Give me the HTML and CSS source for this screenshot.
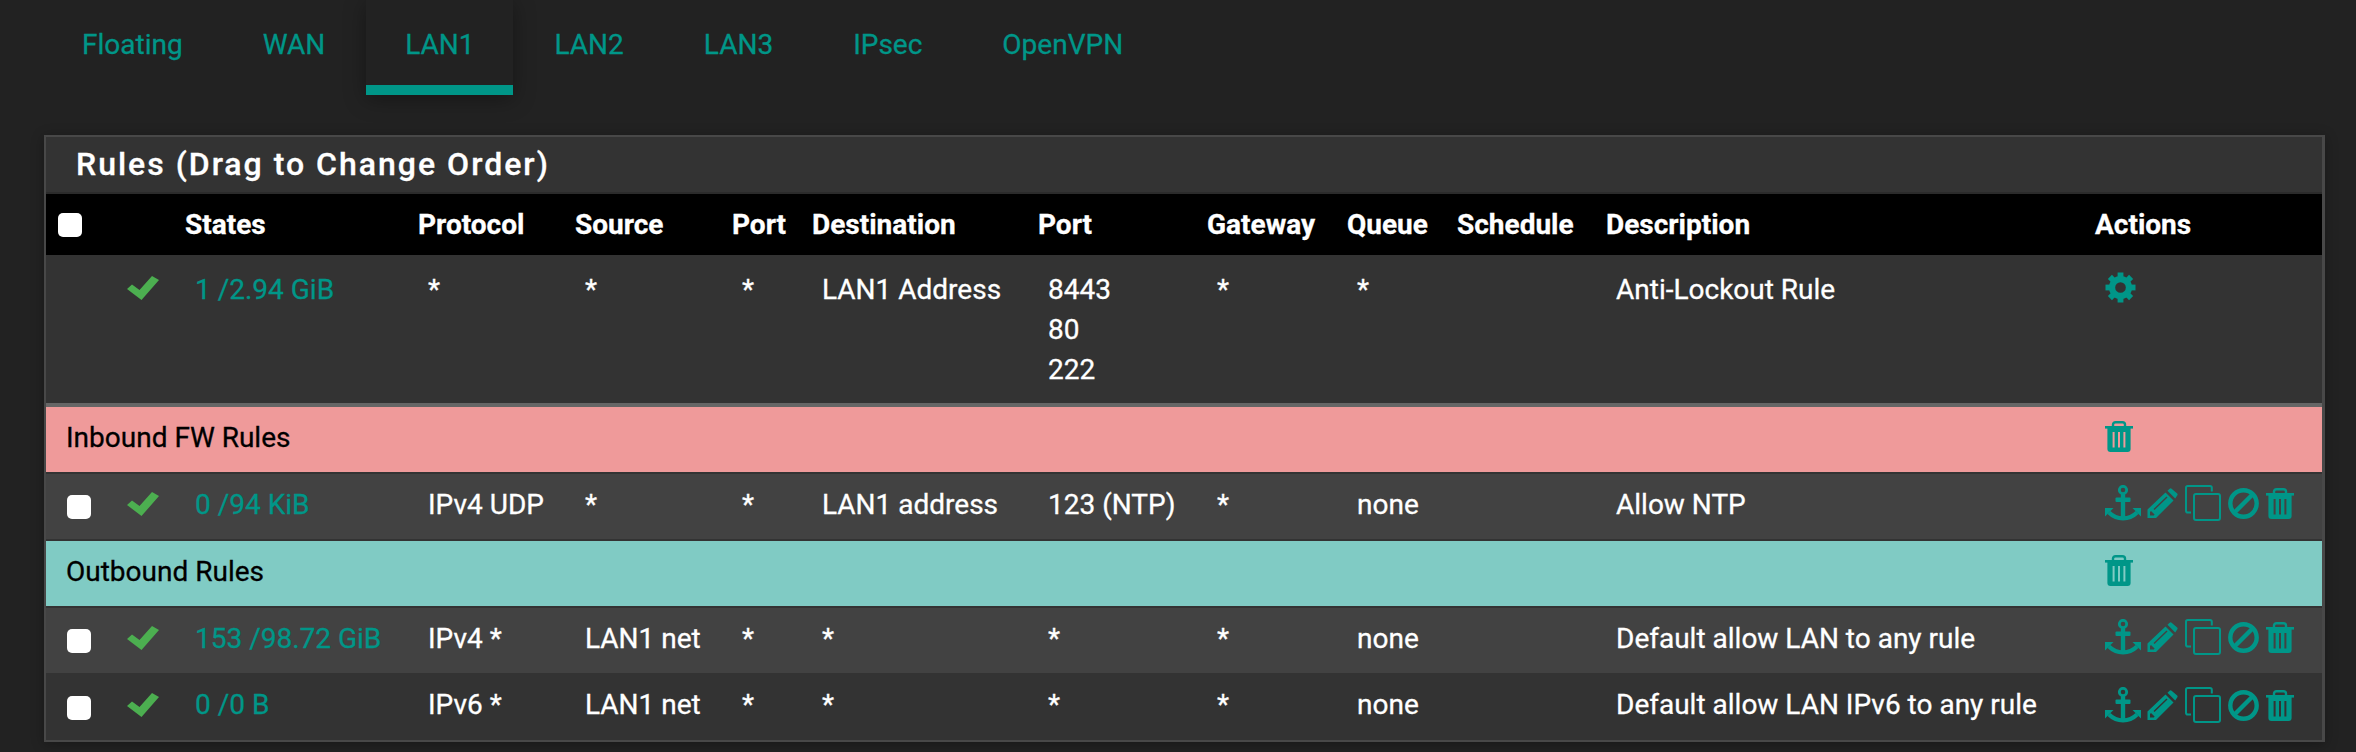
FILE: index.html
```html
<!DOCTYPE html>
<html lang="en">
<head>
<meta charset="utf-8">
<title>Firewall Rules: LAN1</title>
<link rel="stylesheet" href="styles.css">
</head>
<body>
<svg class="sprites" aria-hidden="true">
  <symbol id="i-check" viewBox="0 0 32 24"><polygon fill="currentColor" points="0,13 5,8.5 12.5,14 25,0 32,4 14.5,24"/></symbol>
  <symbol id="i-gear" viewBox="0 0 32 32">
    <circle cx="16" cy="16" r="8.7" fill="none" stroke="currentColor" stroke-width="6.4"/>
    <g fill="currentColor">
      <rect x="13" y="0.5" width="6" height="6"/><rect x="13" y="0.5" width="6" height="6" transform="rotate(45 16 16)"/>
      <rect x="13" y="0.5" width="6" height="6" transform="rotate(90 16 16)"/><rect x="13" y="0.5" width="6" height="6" transform="rotate(135 16 16)"/>
      <rect x="13" y="0.5" width="6" height="6" transform="rotate(180 16 16)"/><rect x="13" y="0.5" width="6" height="6" transform="rotate(225 16 16)"/>
      <rect x="13" y="0.5" width="6" height="6" transform="rotate(270 16 16)"/><rect x="13" y="0.5" width="6" height="6" transform="rotate(315 16 16)"/>
    </g>
  </symbol>
  <symbol id="i-trash" viewBox="0 0 28 31">
    <path fill="none" stroke="currentColor" stroke-width="2.4" d="M8 6V3.6Q8 1.2 10.6 1.2H17.4Q20 1.2 20 3.6V6"/>
    <rect fill="currentColor" y="5" width="28" height="2.6"/>
    <path fill="currentColor" fill-rule="evenodd" d="M2.4 7H25.6V28Q25.6 31 22.6 31H5.4Q2.4 31 2.4 28ZM7.6 11V26.5H9.6V11ZM13 11V26.5H15V11ZM18.4 11V26.5H20.4V11Z"/>
  </symbol>
  <symbol id="i-anchor" viewBox="0 0 36 36">
    <circle cx="18" cy="5" r="3.7" fill="none" stroke="currentColor" stroke-width="2.8"/>
    <rect fill="currentColor" x="10.5" y="12.5" width="15" height="4.6" rx="1"/>
    <rect fill="currentColor" x="15.8" y="9" width="4.4" height="25"/>
    <path fill="none" stroke="currentColor" stroke-width="4.2" d="M4 27.5C8 31.5 13 33.4 18 33.4C23 33.4 28 31.5 32 27.5"/>
    <polygon fill="currentColor" points="0,23 8.5,23 0,31.5"/>
    <polygon fill="currentColor" points="36,23 27.5,23 36,31.5"/>
  </symbol>
  <symbol id="i-pencil" viewBox="0 0 31 31">
    <path fill="currentColor" fill-rule="evenodd" d="M0.5 21.5L18.5 4.5L26.5 12.5L9 30H0.5ZM19.5 8.5L6.5 21L7.5 22L20.5 9.5ZM3 24V27.5H6.8L7.6 26.6L4 23Z"/>
    <path fill="currentColor" d="M20.5 2.8L22.6 0.7Q23.6 -0.1 24.6 0.7L30.2 5.6Q31 6.6 30.2 7.6L28.2 10.4Z"/>
  </symbol>
  <symbol id="i-copy" viewBox="0 0 36 36">
    <path fill="none" stroke="currentColor" stroke-width="2" d="M6 27.5H2.8Q1 27.5 1 25.7V2.8Q1 1 2.8 1H25Q26.8 1 26.8 2.8V6.5"/>
    <rect fill="none" stroke="currentColor" stroke-width="2" x="9" y="9" width="26" height="26" rx="2"/>
  </symbol>
  <symbol id="i-ban" viewBox="0 0 31 31">
    <circle cx="15.5" cy="15.5" r="13.2" fill="none" stroke="currentColor" stroke-width="4.4"/>
    <line x1="6.5" y1="24.5" x2="24.5" y2="6.5" stroke="currentColor" stroke-width="4.4"/>
  </symbol>
</svg>

<nav class="tabs">
  <a class="tab">Floating</a>
  <a class="tab">WAN</a>
  <a class="tab tab-active">LAN1</a>
  <a class="tab">LAN2</a>
  <a class="tab">LAN3</a>
  <a class="tab">IPsec</a>
  <a class="tab">OpenVPN</a>
</nav>

<section class="panel">
  <h2 class="panel-title">Rules (Drag to Change Order)</h2>
  <table class="rules">
    <colgroup>
      <col class="c-box"><col class="c-ok"><col class="c-states"><col class="c-proto"><col class="c-src"><col class="c-sport"><col class="c-dest"><col class="c-dport"><col class="c-gw"><col class="c-queue"><col class="c-sched"><col class="c-desc"><col class="c-act">
    </colgroup>
    <thead>
      <tr>
        <th class="head-box"><input type="checkbox" class="box"></th>
        <th></th>
        <th>States</th><th>Protocol</th><th>Source</th><th>Port</th><th>Destination</th><th>Port</th><th>Gateway</th><th>Queue</th><th>Schedule</th><th>Description</th><th>Actions</th>
      </tr>
    </thead>
    <tbody>
      <tr class="row row-lockout">
        <td></td>
        <td class="cell-ok"><svg class="ic-check"><use href="#i-check"/></svg></td>
        <td class="states">1 /2.94 GiB</td>
        <td>*</td><td>*</td><td>*</td>
        <td>LAN1 Address</td>
        <td>8443<br>80<br>222</td>
        <td>*</td><td>*</td><td></td>
        <td>Anti-Lockout Rule</td>
        <td class="actions"><svg class="ic-gear"><use href="#i-gear"/></svg></td>
      </tr>
      <tr class="section section-in">
        <td colspan="12" class="section-label">Inbound FW Rules</td>
        <td class="actions"><svg class="ic-trash"><use href="#i-trash"/></svg></td>
      </tr>
      <tr class="row row-light">
        <td class="cell-box"><input type="checkbox" class="box"></td>
        <td class="cell-ok"><svg class="ic-check"><use href="#i-check"/></svg></td>
        <td class="states">0 /94 KiB</td>
        <td>IPv4 UDP</td><td>*</td><td>*</td>
        <td>LAN1 address</td>
        <td>123 (NTP)</td>
        <td>*</td><td>none</td><td></td>
        <td>Allow NTP</td>
        <td class="actions"><div class="action-set"><svg class="ic-anchor"><use href="#i-anchor"/></svg><svg class="ic-pencil"><use href="#i-pencil"/></svg><svg class="ic-copy"><use href="#i-copy"/></svg><svg class="ic-ban"><use href="#i-ban"/></svg><svg class="ic-trash"><use href="#i-trash"/></svg></div></td>
      </tr>
      <tr class="section section-out">
        <td colspan="12" class="section-label">Outbound Rules</td>
        <td class="actions"><svg class="ic-trash"><use href="#i-trash"/></svg></td>
      </tr>
      <tr class="row row-light">
        <td class="cell-box"><input type="checkbox" class="box"></td>
        <td class="cell-ok"><svg class="ic-check"><use href="#i-check"/></svg></td>
        <td class="states">153 /98.72 GiB</td>
        <td>IPv4 *</td><td>LAN1 net</td><td>*</td>
        <td>*</td>
        <td>*</td>
        <td>*</td><td>none</td><td></td>
        <td>Default allow LAN to any rule</td>
        <td class="actions"><div class="action-set"><svg class="ic-anchor"><use href="#i-anchor"/></svg><svg class="ic-pencil"><use href="#i-pencil"/></svg><svg class="ic-copy"><use href="#i-copy"/></svg><svg class="ic-ban"><use href="#i-ban"/></svg><svg class="ic-trash"><use href="#i-trash"/></svg></div></td>
      </tr>
      <tr class="row row-dark">
        <td class="cell-box"><input type="checkbox" class="box"></td>
        <td class="cell-ok"><svg class="ic-check"><use href="#i-check"/></svg></td>
        <td class="states">0 /0 B</td>
        <td>IPv6 *</td><td>LAN1 net</td><td>*</td>
        <td>*</td>
        <td>*</td>
        <td>*</td><td>none</td><td></td>
        <td>Default allow LAN IPv6 to any rule</td>
        <td class="actions"><div class="action-set"><svg class="ic-anchor"><use href="#i-anchor"/></svg><svg class="ic-pencil"><use href="#i-pencil"/></svg><svg class="ic-copy"><use href="#i-copy"/></svg><svg class="ic-ban"><use href="#i-ban"/></svg><svg class="ic-trash"><use href="#i-trash"/></svg></div></td>
      </tr>
    </tbody>
  </table>
</section>
</body>
</html>
```

FILE: styles.css
```css
* { box-sizing: border-box; }

html, body { height: 100%; }

body {
  margin: 0;
  background: #222;
  color: #fff;
  font-family: Roboto, "Liberation Sans", sans-serif;
  font-size: 28px;
  -webkit-text-stroke: .3px;
  overflow: hidden;
}

.sprites { display: none; }

.tabs {
  display: flex;
  gap: 2px;
  height: 95px;
  padding-left: 43px;
}

.tab {
  padding: 27px 39px 0;
  color: #009688;
  font-size: 28px;
  line-height: 36px;
}

.tab-active {
  background: #222;
  border-bottom: 10px solid #009688;
  box-shadow: 0 4px 20px rgba(0, 0, 0, .35);
}

.panel {
  width: 2281px;
  margin: 40px 0 0 44px;
  background: #333;
  border: 2px solid #484848;
  border-right-width: 3px;
  box-shadow: 0 2px 12px rgba(0, 0, 0, .3);
}

.panel-title {
  margin: 0;
  height: 57px;
  padding: 9px 0 0 30px;
  border-bottom: 2px solid #2b2b2b;
  font-size: 32px;
  font-weight: 500;
  line-height: 36px;
  letter-spacing: 2px;
}

.rules {
  width: 100%;
  table-layout: fixed;
  border-collapse: separate;
  border-spacing: 0;
}

.c-box { width: 79px; }
.c-ok { width: 60px; }
.c-states { width: 233px; }
.c-proto { width: 157px; }
.c-src { width: 157px; }
.c-sport { width: 80px; }
.c-dest { width: 226px; }
.c-dport { width: 169px; }
.c-gw { width: 140px; }
.c-queue { width: 110px; }
.c-sched { width: 149px; }
.c-desc { width: 489px; }
.c-act { width: 227px; }

.rules th {
  height: 61px;
  padding: 0;
  background: #000;
  font-weight: 700;
  text-align: left;
  vertical-align: middle;
}

.rules th.head-box { padding-left: 12px; }

.rules td {
  padding: 0 0 0 10px;
  vertical-align: top;
  line-height: 40px;
}

.box {
  appearance: none;
  display: block;
  width: 24px;
  height: 24px;
  margin: 0;
  background: #fff;
  border-radius: 5px;
}

.states { color: #009688; }

.row td {
  padding-top: 11px;
  border-bottom: 2px solid #333;
}

.rules .row-lockout td {
  height: 152px;
  padding-top: 15px;
  background: #333;
  border-bottom: 4px solid #666;
}

.row-light td { height: 67px; background: #424242; }
.rules .row-dark td { height: 65px; padding-top: 10px; background: #333; border-bottom: 0; }
.rules .row-dark td.actions { padding-top: 12px; }

.section td {
  height: 67px;
  color: #000;
  border-bottom: 2px solid #333;
}

.section-in td { background: #ef9a9a; }
.section-out td { background: #80cbc4; }

.rules td.section-label { padding: 11px 0 0 20px; }

.rules .row td.cell-box { padding: 21px 0 0 21px; }
.rules .row td.cell-ok { padding: 18px 0 0 2px; }
.rules .row-lockout td.cell-ok { padding-top: 21px; }

.rules .actions { color: #009688; }
.rules .section .actions { padding-top: 14px; }

svg { display: block; }

.ic-check { width: 32px; height: 24px; color: #4caf50; }
.ic-gear { width: 31px; height: 31px; margin-top: 2px; }
.ic-trash { width: 28px; height: 31px; }
.ic-anchor { width: 36px; height: 36px; margin-top: -3px; }
.ic-pencil { width: 31px; height: 31px; margin-left: 6px; }
.ic-copy { width: 36px; height: 36px; margin: -3px 0 0 7px; }
.ic-ban { width: 31px; height: 31px; margin-left: 7px; }
.action-set .ic-trash { margin-left: 7px; }

.action-set { display: flex; align-items: flex-start; padding-top: 3px; }
```
